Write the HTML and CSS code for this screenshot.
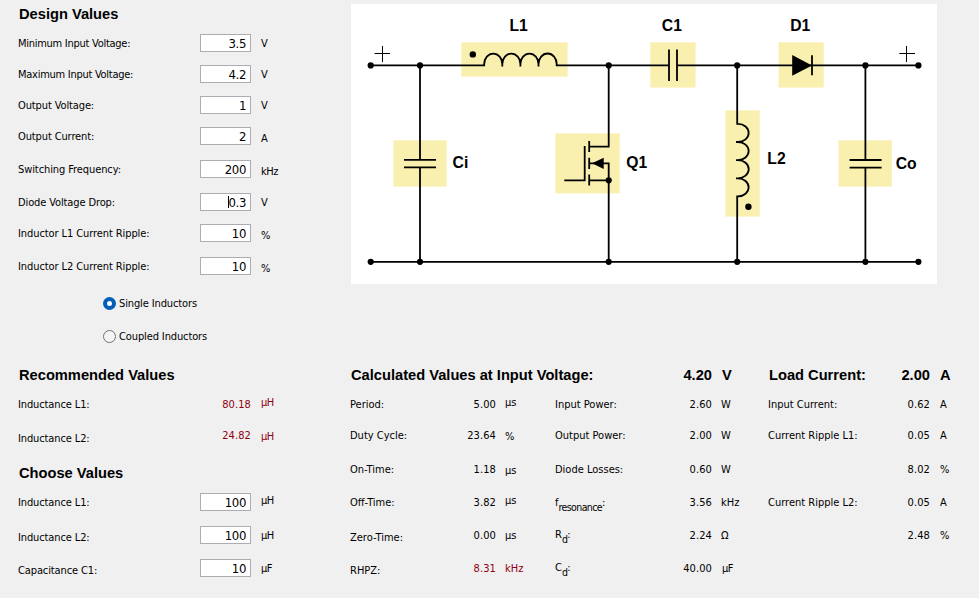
FILE: index.html
```html
<!DOCTYPE html>
<html lang="en">
<head>
<meta charset="utf-8">
<title>Converter Design</title>
<link rel="stylesheet" href="styles.css">
</head>
<body>
<main class="page">
  <div class="top">
    <section class="design">
      <h2>Design Values</h2>
      <div class="row"><span class="label snug">Minimum Input Voltage:</span><span class="field">3.5</span><span class="unit">V</span></div>
      <div class="row"><span class="label snug">Maximum Input Voltage:</span><span class="field">4.2</span><span class="unit">V</span></div>
      <div class="row"><span class="label">Output Voltage:</span><span class="field">1</span><span class="unit">V</span></div>
      <div class="row tall"><span class="label">Output Current:</span><span class="field">2</span><span class="unit dn2">A</span></div>
      <div class="row tall"><span class="label loose">Switching Frequency:</span><span class="field">200</span><span class="unit dn2 tight">kHz</span></div>
      <div class="row"><span class="label">Diode Voltage Drop:</span><span class="field"><i class="caret"></i>0.3</span><span class="unit">V</span></div>
      <div class="row tall"><span class="label loose">Inductor L1 Current Ripple:</span><span class="field">10</span><span class="unit dn2">%</span></div>
      <div class="row tall"><span class="label loose">Inductor L2 Current Ripple:</span><span class="field">10</span><span class="unit dn2">%</span></div>
      <div class="choices">
        <div class="choice"><span class="radio on"></span><span>Single Inductors</span></div>
        <div class="choice"><span class="radio"></span><span>Coupled Inductors</span></div>
      </div>
    </section>

    <svg class="circuit" viewBox="351 4 586 280" width="586" height="280">
      <g fill="#f9f0b0">
        <rect x="461.3" y="42.3" width="106.3" height="34.3"/>
        <rect x="650.3" y="42.3" width="45.3" height="45.3"/>
        <rect x="778.5" y="42.3" width="45.2" height="45.3"/>
        <rect x="725.4" y="110.4" width="34.3" height="106.2"/>
        <rect x="393.4" y="140.3" width="53.3" height="46.3"/>
        <rect x="838.5" y="140.3" width="53.3" height="46.3"/>
        <rect x="555.4" y="133.4" width="64.3" height="60"/>
      </g>
      <g fill="none" stroke="#000" stroke-width="1.8">
        <path d="M370.7 65.4H484.2V64A9 10.4 0 0 1 502.3 64V66.5V64A9 10.4 0 0 1 520.4 64V66.5V64A9 10.4 0 0 1 538.5 64V66.5V64A9 10.4 0 0 1 556.7 64V65.4H669"/>
        <path d="M677 65.4H918.3M370.7 261.8H918.3"/>
        <path d="M420 65.4V159.8M420 167.4V261.8M865.4 65.4V160M865.4 167.6V261.8"/>
        <path d="M404 159.8H436M404 167.4H436M849.6 160H881.6M849.6 167.6H881.6"/>
        <path d="M669 49.6V81M677 49.6V81M812 55.3V75.3"/>
        <path d="M737.2 65.4V123.9H738A10.6 9 0 0 1 738 142H736H738A10.6 9 0 0 1 738 160.1H736H738A10.6 9 0 0 1 738 178.3H736H738A10.6 9 0 0 1 738 196.4H737.2V261.8"/>
        <path d="M608.7 65.4V146.6H589.2M589.2 141V152M589.2 157.8V169M589.2 174.6V185.6M564.3 180.3H584.7V146M589.2 163.3H608.7V261.8M589.2 180.3H608.7"/>
      </g>
      <path d="M592 163.3L603.7 157.7V169ZM792.2 55L812 65.4L792.2 75.7Z"/>
      <path d="M374.5 53.5H390M382.5 46V62M899.3 53.5H915M906.5 46V62" stroke="#000" stroke-width="1"/>
      <g>
        <circle cx="370.7" cy="65.4" r="3.1"/><circle cx="420" cy="65.4" r="3.1"/><circle cx="608.7" cy="65.4" r="3.1"/>
        <circle cx="737.2" cy="65.4" r="3.1"/><circle cx="865.4" cy="65.4" r="3.1"/><circle cx="918.4" cy="65.4" r="3.1"/>
        <circle cx="370.7" cy="261.8" r="3.1"/><circle cx="420" cy="261.8" r="3.1"/><circle cx="608.7" cy="261.8" r="3.1"/>
        <circle cx="737.2" cy="261.8" r="3.1"/><circle cx="865.4" cy="261.8" r="3.1"/><circle cx="918.4" cy="261.8" r="3.1"/>
        <circle cx="608.7" cy="180.3" r="3.1"/><circle cx="472.8" cy="54.4" r="3.2"/><circle cx="748.4" cy="206.7" r="3.2"/>
      </g>
      <g class="names">
        <text x="509.5" y="31.4">L1</text><text x="661.8" y="31.4">C1</text><text x="790.2" y="31.4">D1</text>
        <text x="452.6" y="168">Ci</text><text x="626.3" y="168">Q1</text><text x="767.3" y="164">L2</text><text x="895.7" y="168.7">Co</text>
      </g>
    </svg>
  </div>

  <div class="bottom">
    <section class="inductances">
      <h2>Recommended Values</h2>
      <div class="row r34 red"><span class="label">Inductance L1:</span><span class="value">80.18</span><span class="unit up2 tight">µH</span></div>
      <div class="row r34 red"><span class="label">Inductance L2:</span><span class="value up3">24.82</span><span class="unit up2 tight">µH</span></div>
      <h2 class="second">Choose Values</h2>
      <div class="row tall"><span class="label">Inductance L1:</span><span class="field">100</span><span class="unit up2 tight">µH</span></div>
      <div class="row tall"><span class="label dn2">Inductance L2:</span><span class="field">100</span><span class="unit tight">µH</span></div>
      <div class="row tall"><span class="label dn2">Capacitance C1:</span><span class="field">10</span><span class="unit tight">µF</span></div>
    </section>

    <section class="calculated">
      <div class="calc head"><h2 class="wide">Calculated Values at Input Voltage:</h2><b class="value">4.20</b><b class="unit">V</b><h2>Load Current:</h2><b class="value">2.00</b><b class="unit">A</b></div>
      <div class="calc"><span>Period:</span><span class="value">5.00</span><span class="unit up2">µs</span><span>Input Power:</span><span class="value">2.60</span><span class="unit">W</span><span>Input Current:</span><span class="value">0.62</span><span class="unit">A</span></div>
      <div class="calc r34"><span>Duty Cycle:</span><span class="value">23.64</span><span class="unit dn1">%</span><span>Output Power:</span><span class="value">2.00</span><span class="unit">W</span><span>Current Ripple L1:</span><span class="value">0.05</span><span class="unit">A</span></div>
      <div class="calc tall"><span>On-Time:</span><span class="value">1.18</span><span class="unit dn1">µs</span><span>Diode Losses:</span><span class="value">0.60</span><span class="unit">W</span><span></span><span class="value">8.02</span><span class="unit">%</span></div>
      <div class="calc tall"><span>Off-Time:</span><span class="value">3.82</span><span class="unit up2">µs</span><span>f<sub>resonance</sub>:</span><span class="value">3.56</span><span class="unit">kHz</span><span>Current Ripple L2:</span><span class="value">0.05</span><span class="unit">A</span></div>
      <div class="calc tall"><span class="dn2">Zero-Time:</span><span class="value">0.00</span><span class="unit">µs</span><span class="up1">R<sub>d</sub>:</span><span class="value">2.24</span><span class="unit">Ω</span><span></span><span class="value">2.48</span><span class="unit">%</span></div>
      <div class="calc tall"><span class="dn2">RHPZ:</span><span class="value crimson">8.31</span><span class="unit crimson">kHz</span><span class="up1">C<sub>d</sub>:</span><span class="value">40.00</span><span class="unit tight">µF</span></div>
    </section>
  </div>
</main>
</body>
</html>
```

FILE: styles.css
```css
* { box-sizing: border-box; }

body {
  margin: 0;
  background: #f0f0f0;
  color: #000;
  font: 11px/14px "DejaVu Sans Condensed", "DejaVu Sans", sans-serif;
  font-stretch: condensed;
  letter-spacing: -0.12px;
}

.page {
  width: 979px;
  height: 598px;
  overflow: hidden;
  white-space: nowrap;
}

.top { display: flex; height: 366px; padding-top: 4px; }
.design { width: 333px; margin-left: 18px; padding-top: 1px; }
.bottom { display: flex; }
.inductances { width: 332px; margin-left: 18px; }

h2, b {
  margin: 0;
  font: bold 14.67px/18px "Liberation Sans", Arial, sans-serif;
  letter-spacing: 0;
}

h2 { padding-left: 1px; }
.design h2 { height: 31px; }
.inductances h2 { height: 31px; }
.inductances h2.second { height: 31px; margin-top: -1px; }

.row {
  display: grid;
  grid-template-columns: 182px 51px 1fr;
  align-items: start;
  height: 31px;
  padding-top: 1px;
}

.row.tall, .calc.tall { height: 33px; }
.row.r34, .calc.r34 { height: 34px; }

.snug { letter-spacing: -0.27px; }
.loose { letter-spacing: -0.09px; }
.tight { letter-spacing: -0.5px; }

.unit { padding-left: 10px; }
.calc .unit { padding-left: 9px; }
.value { text-align: right; letter-spacing: 0.1px; }

.field {
  display: block;
  height: 18px;
  margin-top: -3px;
  padding-right: 4px;
  border: 1px solid #abadb3;
  background: #fff;
  font-size: 13px;
  line-height: 17px;
  letter-spacing: -0.35px;
  text-align: right;
}

.caret {
  display: inline-block;
  width: 1px;
  height: 12px;
  margin-right: -1px;
  background: #000;
  vertical-align: -1px;
}

.choices { padding: 4px 0 0 85px; }
.choice { display: flex; gap: 3px; height: 33px; padding-top: 1px; }
.radio {
  width: 13px;
  height: 13px;
  border: 1px solid #707070;
  border-radius: 50%;
  background: #f5f5f5;
}
.radio.on { border: 4px solid #005fb8; background: #fff; }

.circuit { display: block; background: #fff; }
.names {
  font: bold 15.7px "Liberation Sans", Arial, sans-serif;
  letter-spacing: 0;
}

.calc {
  display: grid;
  grid-template-columns: 88px 58px 59px 99px 58px 56px 101px 61px 1fr;
  align-items: start;
  height: 31px;
  padding-top: 1px;
  letter-spacing: 0;
}
.calc.head { height: 31px; padding-top: 0; }
.calc .wide { grid-column: span 4; }
.head .value { letter-spacing: 0; }
.calc.head .unit { padding-left: 10px; }

.calc .unit:last-child { padding-left: 10px; }

.red .value, .red .unit, .crimson { color: #900010; }

sub {
  font-size: 10.5px;
  line-height: 0;
  vertical-align: -5px;
  letter-spacing: -0.6px;
}

.up3 { margin-top: -3px; }
.up2 { margin-top: -2px; }
.up1 { margin-top: -1px; }
.dn1 { margin-top: 1px; }
.dn2 { margin-top: 2px; }
```
